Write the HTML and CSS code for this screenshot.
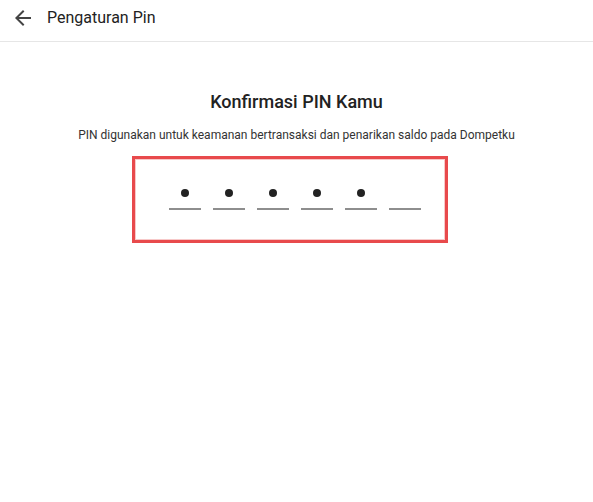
FILE: index.html
```html
<!doctype html>
<html lang="id">
<head>
<meta charset="UTF-8">
<title>Pengaturan Pin</title>
<link rel="stylesheet" href="styles.css">
</head>
<body>
<div class="top_bar">
	<a class="back" href="###"><svg width="24" height="24" viewBox="0 0 24 24"><path d="M20 11H7.83l5.59-5.59L12 4l-8 8 8 8 1.41-1.41L7.83 13H20v-2z" fill="#444"/></svg></a>
	<span class="top_title">Pengaturan Pin</span>
</div>
<div class="pin_page">
	<h1>Konfirmasi PIN Kamu</h1>
	<p>PIN digunakan untuk keamanan bertransaksi dan penarikan saldo pada Dompetku</p>
	<div class="pin_box">
		<span class="pin_cell filled"></span><span class="pin_cell filled"></span><span class="pin_cell filled"></span><span class="pin_cell filled"></span><span class="pin_cell filled"></span><span class="pin_cell"></span>
	</div>
</div>
</body>
</html>
```

FILE: styles.css
```css
html,body {margin: 0;padding: 0;background: #fff;}
body {font-family: Roboto, "Liberation Sans", Arial, sans-serif;color: #212121;}

/* 顶部栏 */
.top_bar {display: flex;align-items: center;height: 42px;border-bottom: 1px solid #e6e6e6;padding: 0 0 6px 11px;box-sizing: border-box;}
.back {display: flex;width: 24px;height: 24px;margin-right: 12px;}
.top_title {font-size: 16px;color: #222;}

/* 内容 */
.pin_page {display: flex;flex-direction: column;align-items: center;padding-top: 49px;}
.pin_page h1 {margin: 0;font-size: 18px;font-weight: 500;line-height: 22px;color: #222;}
.pin_page p {margin: 15px 0 0;font-size: 12px;line-height: 15px;color: #333;}

.pin_box {display: flex;gap: 12px;margin: 13px 14px 0 0;padding: 25px 24px 30px 34px;border: 3px solid #e84a4c;box-shadow: inset 0 0 0 1px #f7c9c9;}
.pin_cell {position: relative;width: 32px;height: 24px;border-bottom: 2px solid #8e8e8e;}
.pin_cell.filled:after {position: absolute;top: 5px;left: 12px;width: 8px;height: 8px;border-radius: 50%;background: #222;content: "";}
```
